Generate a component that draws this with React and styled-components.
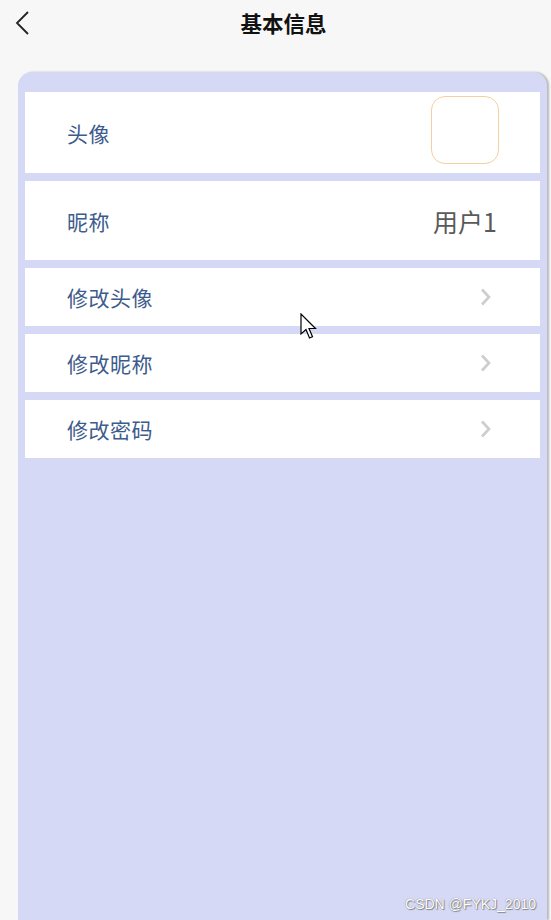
import React from "react";
import styled, { createGlobalStyle } from "styled-components";

const GlobalStyle = createGlobalStyle`
  html, body {
    margin: 0;
    padding: 0;
    background: #f7f7f7;
    height: 100%;
    overflow: hidden;
  }
  body {
    font-family: "Noto Sans CJK SC", "Liberation Sans", sans-serif;
  }
`;

const Page = styled.div`
  position: relative;
  width: 551px;
  height: 920px;
  overflow: hidden;
  display: flex;
  flex-direction: column;
`;

const Header = styled.div`
  height: 46px;
  display: flex;
  align-items: center;
  position: relative;
  & .back {
    position: absolute;
    left: 14px;
    top: 10px;
  }
  & h1 {
    flex: 1;
    margin: 0;
    padding-left: 16px;
    text-align: center;
    font-size: 21.5px;
    font-weight: 700;
    color: #111;
    line-height: 46px;
  }
`;

const Card = styled.div`
  margin: 26px 4px 0 18px;
  flex: 1;
  background: #d6d9f6;
  border-radius: 14px 14px 0 0;
  box-shadow: 2px 0 2px rgba(0, 0, 0, 0.25);
  padding: 20px 7px 0 7px;
  display: flex;
  flex-direction: column;
  gap: 8px;
`;

const Row = styled.div`
  background: #fff;
  height: ${(p) => p.$h}px;
  display: flex;
  align-items: center;
  justify-content: space-between;
  padding: 0 ${(p) => p.$pr}px 0 42px;
  & .label {
    font-size: 21px;
    color: #3d5b8c;
    letter-spacing: 0.5px;
  }
`;

const Avatar = styled.div`
  width: 66px;
  height: 66px;
  border: 1.5px solid #f5cf9f;
  border-radius: 14px;
  margin-bottom: 6px;
`;

const Value = styled.span`
  font-size: 25px;
  color: #5a5a5a;
`;

const Watermark = styled.div`
  position: absolute;
  right: 15px;
  bottom: 8px;
  font-family: "Liberation Sans", Arial, sans-serif;
  font-size: 14px;
  color: #fff;
  text-shadow: 0 0 1px #666, 1px 1px 1px #888;
`;

const Cursor = styled.svg`
  position: absolute;
  left: 300px;
  top: 313px;
`;

const Chevron = () => (
  <svg width="14" height="20" viewBox="0 0 14 20">
    <path d="M3 2.5 L10 10 L3 17.5" fill="none" stroke="#cdcdcd" strokeWidth="2.6" />
  </svg>
);

const items = ["修改头像", "修改昵称", "修改密码"];

export default function App() {
  return (
    <Page>
      <GlobalStyle />
      <Header>
        <svg className="back" width="18" height="26" viewBox="0 0 18 26">
          <path d="M14 2 L3 13 L14 24" fill="none" stroke="#222" strokeWidth="1.8" />
        </svg>
        <h1>基本信息</h1>
      </Header>
      <Card>
        <Row $h={81} $pr={41}>
          <span className="label">头像</span>
          <Avatar />
        </Row>
        <Row $h={79} $pr={43}>
          <span className="label">昵称</span>
          <Value>用户1</Value>
        </Row>
        {items.map((t) => (
          <Row key={t} $h={58} $pr={47}>
            <span className="label">{t}</span>
            <Chevron />
          </Row>
        ))}
      </Card>
      <Cursor width="18" height="28" viewBox="0 0 18 28">
        <path d="M1 1 L1 21 L6 16.5 L9.5 25 L12.5 23.7 L9 15.5 L15.5 15.5 Z" fill="#fff" stroke="#000" strokeWidth="1.2" />
      </Cursor>
      <Watermark>CSDN @FYKJ_2010</Watermark>
    </Page>
  );
}
